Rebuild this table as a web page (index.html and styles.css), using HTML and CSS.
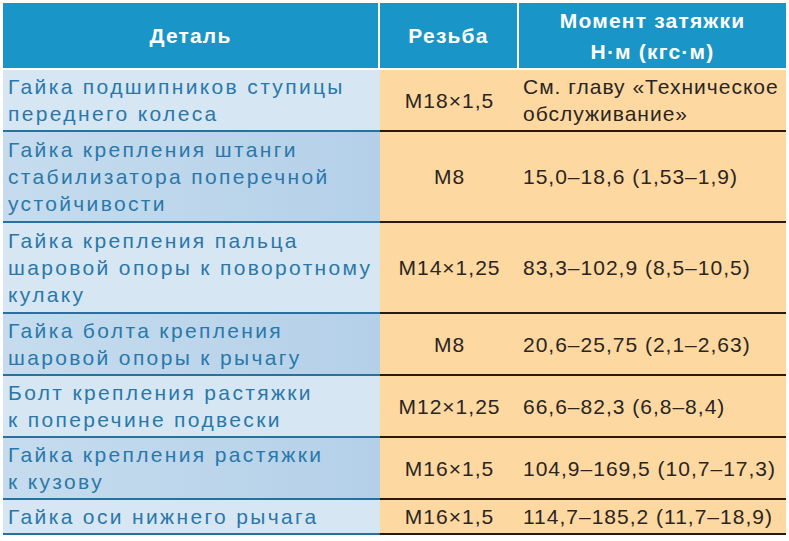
FILE: index.html
```html
<!DOCTYPE html>
<html lang="ru">
<head>
<meta charset="utf-8">
<title>Моменты затяжки</title>
<link rel="stylesheet" href="styles.css">
</head>
<body>
<div class="table">
  <div class="h sep">Деталь</div>
  <div class="h sep">Резьба</div>
  <div class="h"><span>Момент затяжки<br>Н·м (кгс·м)</span></div>

  <div class="c part light">Гайка подшипников ступицы<br>переднего колеса</div>
  <div class="c thread">М18×1,5</div>
  <div class="c torque">См. главу «Техническое<br>обслуживание»</div>

  <div class="c part dark three">Гайка крепления штанги<br>стабилизатора поперечной<br>устойчивости</div>
  <div class="c thread">М8</div>
  <div class="c torque">15,0–18,6 (1,53–1,9)</div>

  <div class="c part light three">Гайка крепления пальца<br>шаровой опоры к поворотному<br>кулаку</div>
  <div class="c thread">М14×1,25</div>
  <div class="c torque">83,3–102,9 (8,5–10,5)</div>

  <div class="c part dark">Гайка болта крепления<br>шаровой опоры к рычагу</div>
  <div class="c thread">М8</div>
  <div class="c torque">20,6–25,75 (2,1–2,63)</div>

  <div class="c part light">Болт крепления растяжки<br>к поперечине подвески</div>
  <div class="c thread">М12×1,25</div>
  <div class="c torque">66,6–82,3 (6,8–8,4)</div>

  <div class="c part dark">Гайка крепления растяжки<br>к кузову</div>
  <div class="c thread">М16×1,5</div>
  <div class="c torque">104,9–169,5 (10,7–17,3)</div>

  <div class="c part light">Гайка оси нижнего рычага</div>
  <div class="c thread">М16×1,5</div>
  <div class="c torque">114,7–185,2 (11,7–18,9)</div>
</div>
</body>
</html>
```

FILE: styles.css
```css
html, body {
  margin: 0;
  padding: 0;
  background: #ffffff;
}

body {
  font-family: "Liberation Sans", Arial, sans-serif;
}

.table {
  display: grid;
  grid-template-columns: 377px 139px 267px;
  margin: 3px 0 0 3px;
  width: 783px;
}

.h {
  box-sizing: border-box;
  height: 67px;
  background: #1a95c7;
  color: #ffffff;
  font-weight: bold;
  font-size: 21px;
  letter-spacing: 1.2px;
  line-height: 31px;
  display: flex;
  align-items: center;
  justify-content: center;
  text-align: center;
  border-bottom: 2px solid #ffffff;
}

.h.sep {
  border-right: 2px solid #ffffff;
}

.c {
  box-sizing: border-box;
  padding: 3px 4px 3px 4px;
  line-height: 27px;
  font-size: 21px;
}

.part {
  color: #2a78aa;
  letter-spacing: 2.35px;
  padding-left: 5px;
  border-bottom: 2px solid #29719d;
  white-space: nowrap;
}

.part.three {
  padding-top: 4px;
  padding-bottom: 4px;
}

.part.light {
  background: #d7e6f3;
}

.part.dark {
  background: linear-gradient(to right, #c6dcee, #b4d0e8);
}

.thread,
.torque {
  background: #fdd8a0;
  color: #2a2522;
  letter-spacing: 1px;
  border-bottom: 2px solid #2b1a0c;
  display: flex;
  align-items: center;
  white-space: nowrap;
}

.thread {
  justify-content: center;
  padding-left: 0;
  padding-right: 0;
}

.torque {
  padding-left: 4px;
}
```
